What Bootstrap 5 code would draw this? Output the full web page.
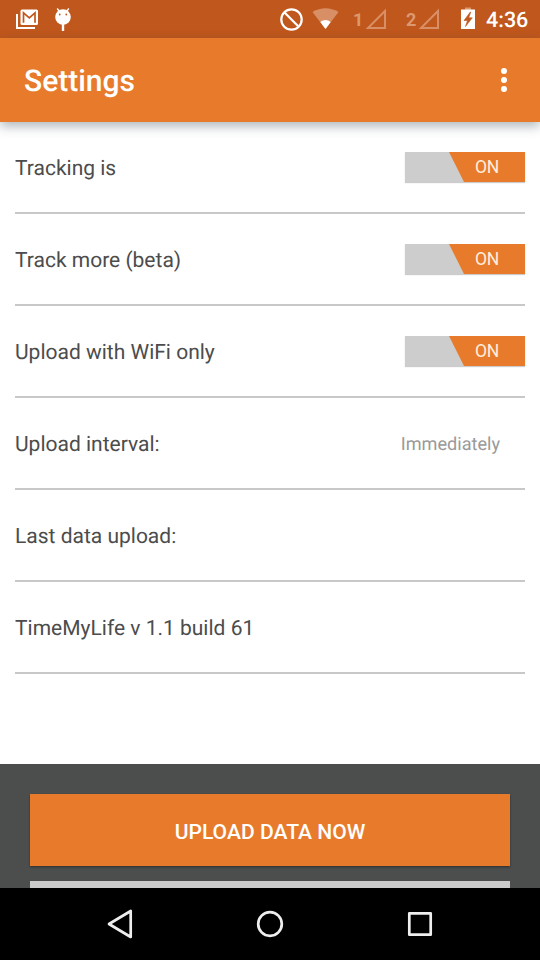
<!DOCTYPE html>
<html lang="en">
<head>
<meta charset="utf-8">
<meta name="viewport" content="width=device-width, initial-scale=1">
<title>Settings</title>
<link href="https://cdn.jsdelivr.net/npm/bootstrap@5.3.0/dist/css/bootstrap.min.css" rel="stylesheet">
<style>
body{font-family:Roboto,"Liberation Sans",sans-serif;color:#4c4c4c;height:960px;text-rendering:geometricPrecision}
svg{display:block;flex:none}
.status-bar{height:38px;background:#c0571c;color:#fff}
.sim{font-size:18px;font-weight:700;line-height:38px;color:#dc996f;padding-top:2px;width:10px}
.clock{font-size:21.5px;font-weight:500;line-height:38px;padding-top:2px;width:54px}
.app-bar{height:84px;background:#e87b2b;box-shadow:0 4px 11px rgba(40,60,70,.38);z-index:1}
.app-title{font-size:30px;font-weight:500;line-height:84px;color:#fff;padding-top:3px}
.settings-list{width:510px}
.setting{height:92px;border-bottom:2px solid #c8c8c8;font-size:21px}
.setting-name{padding-top:5px}
.choice{font-size:18.100px;color:#999;padding-right:25px;padding-top:3px}
.toggle{width:120px;height:30px;border:0;background:linear-gradient(#cdcdcd,#cdcdcd);box-shadow:0 1px 1px rgba(0,0,0,.2);color:#ffeedd;font-size:17.500px}
.toggle-on{width:76px;height:30px;line-height:30px;letter-spacing:-.3px;background:#e87b2b;clip-path:polygon(0 0,100% 0,100% 100%,15px 100%)}
.actions{height:124px;background:#4c4e4d;padding:30px 30px 0;gap:15px}
.btn-upload{--bs-btn-color:#fff;--bs-btn-bg:#e87b2b;--bs-btn-hover-bg:#d96f22;--bs-btn-hover-color:#fff;height:72px;flex:none;font-size:21.100px;font-weight:500;padding-top:9px;box-shadow:0 1px 2px rgba(0,0,0,.4)}
.btn-next{height:72px;flex:none;background:#cbcbcb}
.nav-keys{height:72px}
</style>
<script src="https://cdn.jsdelivr.net/npm/bootstrap@5.3.0/dist/js/bootstrap.bundle.min.js"></script>
</head>
<body class="d-flex flex-column overflow-hidden bg-white">
<div class="status-bar d-flex align-items-start flex-shrink-0">
  <svg width="90" height="38" viewBox="0 0 90 38" fill="none" aria-label="Notifications">
    <path d="M17 14V28H35" stroke="#fff" stroke-width="2"/>
    <rect x="20.500" y="9.500" width="17.500" height="15.500" rx="1.500" fill="#fff"/>
    <path d="M23.500 22.700V12.800L29.300 17.800L35 12.800V22.700" stroke="#c0571c" stroke-width="1.700"/>
    <path d="M57.200 8.500L59.500 11.500M68.800 8.500L66.500 11.500" stroke="#fff" stroke-width="1.400"/>
    <circle cx="63" cy="17" r="7.800" fill="#fff"/>
    <path d="M63 24V31" stroke="#fff" stroke-width="2.400"/>
    <circle cx="59.700" cy="14.500" r=".9" fill="#c0571c"/><circle cx="66.300" cy="14.500" r=".9" fill="#c0571c"/>
  </svg>
  <svg class="ms-auto" width="73" height="38" viewBox="280 0 73 38" fill="none" aria-label="Blocked, WiFi">
    <circle cx="291.500" cy="19.500" r="10.200" stroke="#fff" stroke-width="2.200"/>
    <path d="M284.300 12.300L298.700 26.700" stroke="#fff" stroke-width="2.200"/>
    <path d="M312.500 12Q325.500 4.500 338.500 12L325.500 29Z" fill="#d98f66"/>
    <path d="M320.300 22Q325.500 18 330.700 22L325.500 29Z" fill="#fff"/>
  </svg>
  <span class="sim">1</span>
  <svg width="43" height="38" viewBox="363 0 43 38" fill="none"><path d="M368 28H385V11Z" stroke="#d98f66" stroke-width="2"/></svg>
  <span class="sim">2</span>
  <svg width="70" height="38" viewBox="416 0 70 38" fill="none">
    <path d="M421 28H438V11Z" stroke="#d98f66" stroke-width="2"/>
    <path d="M465 7.500H471V10H465Z" fill="#dc996f"/>
    <path d="M461 9.500H475V29H461Z" fill="#fff"/>
    <path d="M470.300 12L464 20.500H467.500L465.500 26.500L472.300 17.800H468.700L470.800 12Z" fill="#c0571c" stroke="#c0571c" stroke-width=".6"/>
  </svg>
  <span class="clock">4:36</span>
</div>
<header class="app-bar d-flex align-items-center justify-content-between flex-shrink-0 position-relative ps-4">
  <h1 class="app-title m-0">Settings</h1>
  <svg width="72" height="84" viewBox="468 38 72 84" fill="#fff" role="img" aria-label="More options"><circle cx="504" cy="71" r="3"/><circle cx="504" cy="80" r="3"/><circle cx="504" cy="89" r="3"/></svg>
</header>
<main class="settings-list flex-grow-1 mx-auto">
  <div class="setting d-flex align-items-center justify-content-between"><span class="setting-name">Tracking is</span><button class="toggle p-0 d-flex justify-content-end"><span class="toggle-on text-center">ON</span></button></div>
  <div class="setting d-flex align-items-center justify-content-between"><span class="setting-name">Track more (beta)</span><button class="toggle p-0 d-flex justify-content-end"><span class="toggle-on text-center">ON</span></button></div>
  <div class="setting d-flex align-items-center justify-content-between"><span class="setting-name">Upload with WiFi only</span><button class="toggle p-0 d-flex justify-content-end"><span class="toggle-on text-center">ON</span></button></div>
  <div class="setting d-flex align-items-center justify-content-between"><span class="setting-name">Upload interval:</span><span class="choice">Immediately</span></div>
  <div class="setting d-flex align-items-center"><span class="setting-name">Last data upload:</span></div>
  <div class="setting d-flex align-items-center"><span class="setting-name">TimeMyLife v 1.1 build 61</span></div>
</main>
<section class="actions d-flex flex-column flex-shrink-0 overflow-hidden">
  <button class="btn btn-upload rounded-0 border-0">UPLOAD DATA NOW</button>
  <div class="btn-next"></div>
</section>
<footer class="nav-keys bg-black d-flex justify-content-center align-items-center flex-shrink-0">
  <svg width="150" height="72" viewBox="45 888 150 72" fill="none" stroke="#eee" stroke-width="2.700" stroke-linejoin="round"><path d="M109 924L130.700 911V937Z"/></svg>
  <svg width="150" height="72" viewBox="195 888 150 72" fill="none" stroke="#eee" stroke-width="2.700"><circle cx="270" cy="924" r="11.800"/></svg>
  <svg width="150" height="72" viewBox="345 888 150 72" fill="none" stroke="#eee" stroke-width="2.700" stroke-linejoin="round"><rect x="409.300" y="913.300" width="21.400" height="21.400"/></svg>
</footer>
</body>
</html>
